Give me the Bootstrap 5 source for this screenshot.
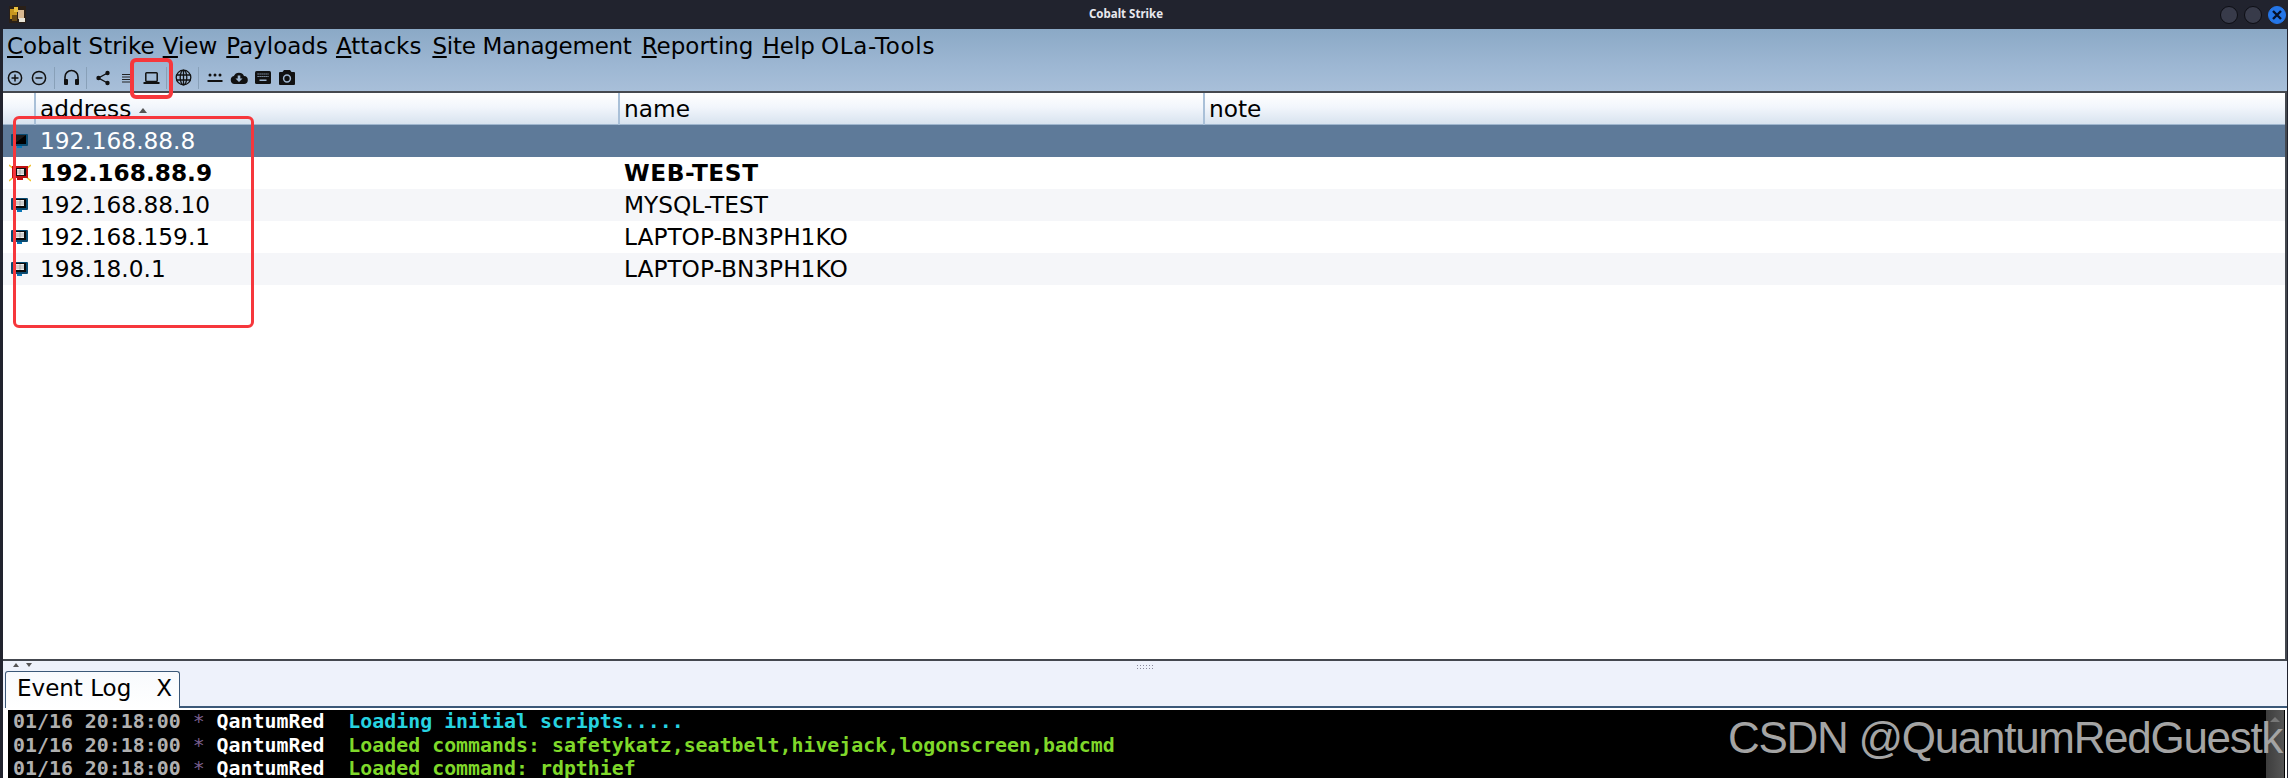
<!DOCTYPE html>
<html lang="en">
<head>
<meta charset="utf-8">
<title>Cobalt Strike</title>
<link rel="stylesheet" href="https://cdn.jsdelivr.net/npm/bootstrap@5.3.0/dist/css/bootstrap.min.css">
<style>
html,body{height:778px;overflow:hidden;background:#21232e}
body{font-family:"DejaVu Sans",sans-serif;color:#000;position:relative}
.titlebar{height:29px;background:#21232e;padding:0 0 0 9px}
.wintitle{flex:1 1 auto;padding-left:6px;margin-bottom:2px;text-align:center;color:#e8e8ee;font:700 11.5px/16px "Noto Sans",sans-serif}
.winbtn{width:18px;height:18px;border-radius:50%;background:#383b4a;border:1px solid #0d0e14;margin-right:6px}
.winbtn.closer{background:#2476e8;border-color:#2476e8;margin-right:2px}
.appshell{margin:0 1px 0 3px;height:749px}
.menuband{height:64px;background:linear-gradient(180deg,#8ba9c6 0%,#9db7d3 60%,#a8bfd9 100%);border-bottom:2px solid #44484f}
.menurow{height:36px;font-size:23px;line-height:35px;white-space:nowrap}
.menuitem{display:block;margin-left:9px}
.menuitem.first{margin-left:4px}
.menuitem.tight{margin-left:8px}
.menuitem.squeezed{letter-spacing:-.25px;margin-left:11px}
.menuitem.wider{margin-left:10px}
.menuitem.stretched{letter-spacing:.7px;margin-left:6px}
.toolrow{height:25px;padding-left:0}
.tbtn{width:24px;height:24px}
.tsep{width:8px;height:24px;position:relative}
.tsep::after{content:"";position:absolute;left:3px;top:1px;bottom:1px;width:1px;background:#88a0b8}
.gridarea{height:568px;background:#fff;overflow:hidden;border-right:2px solid #44484f;border-bottom:2px solid #44484f}
.hosts{table-layout:fixed;width:100%;font-size:23.25px;margin:0;border-collapse:collapse}
.hosts>*>tr>*{padding:0;border:0;background:transparent;color:#000;box-shadow:none;vertical-align:middle;line-height:32px;height:32px;white-space:nowrap}
.hosts>thead>tr>th{font-weight:400;height:31px;line-height:28px;padding:2px 0 0 4px;background:linear-gradient(180deg,#fff 0%,#f2f6fc 45%,#d8e3ef 100%);border-left:2px solid #a9c0d8;border-bottom:1px solid #9fb6ce}
.hosts>thead>tr>th:first-child{border-left:0}
.hosts tbody td{padding-left:5px}
.hosts tbody td:first-child{padding-left:8px}
.hosts tbody td.namecell{padding-left:5px}
.hosts tbody td.namecell.fw-bold{letter-spacing:.6px}
.hosts tbody tr.picked>td{background:#5e7a99;color:#fff}
.hosts tbody tr.zebra>td{background:#f5f6f9}
.sortmark{display:inline-block;width:0;height:0;border:4px solid transparent;border-bottom:5px solid #555;border-top:0;margin-left:8px;vertical-align:middle}
.hosticon{display:block;margin-top:2px}
.hosticon.warned{margin-left:-2px;margin-top:0}
.splitband{height:47px;background:#eef2fb;position:relative}
.splitgrip{position:absolute;left:10px;top:2px;display:flex;gap:7px}
.arrowup{width:0;height:0;border:3px solid transparent;border-top:0;border-bottom:4px solid #555}
.arrowdown{width:0;height:0;border:3px solid transparent;border-bottom:0;border-top:4px solid #555}
.griptex{position:absolute;left:1133px;top:3px;width:19px;height:5px;background-image:radial-gradient(#889 40%,transparent 45%);background-size:3px 3px}
.tabstrip{position:absolute;left:2px;right:0;bottom:0;height:2px;background:#3b5878}
.evtab{position:absolute;left:2px;bottom:0;width:175px;height:37px;background:#fff;background-image:linear-gradient(180deg,#f8fafd,#fff);border:1px solid #3b5878;border-bottom:0;border-radius:3px 3px 0 0;font-size:23px;line-height:33px;padding:0 0 0 11px;z-index:1;white-space:nowrap}
.tabx{margin-left:25px}
.consolewrap{padding:2px 2px 0 5px;height:70px;overflow:hidden;position:relative;background:#fff}
.conlines{background:#000;height:68px;margin:0;padding:0 0 0 5px;font:700 19.9px/23.5px "DejaVu Sans Mono",monospace;white-space:pre;overflow:hidden;border-radius:0;color:#b0b0b0}
.ts{color:#b0b0b0}
.star{color:#7a5f8e;font-weight:400}
.who{color:#fff}
.c-cyan{color:#27d3e0}
.c-green{color:#7fd82a}
.vscroll{position:absolute;right:3px;top:2px;width:18px;bottom:0;background:linear-gradient(90deg,#3d3d3d,#555)}
.vscroll::before{content:"";position:absolute;left:4px;top:7px;border:5px solid transparent;border-top:0;border-bottom:5px solid #777}
.stamp{position:absolute;left:1728px;top:712px;font:400 44px/52px "Liberation Sans",sans-serif;color:#a4a4a4;letter-spacing:-1.3px;white-space:nowrap;z-index:5}
.redbox{position:absolute;border:4px solid #f6373c;border-radius:6px;z-index:6}
.redbox.one{left:130px;top:58px;width:43px;height:41px}
.redbox.two{left:13px;top:116px;width:241px;height:212px;border-width:3px}
</style>
</head>
<body>
<header class="titlebar d-flex align-items-center">
  <svg width="17" height="17" viewBox="0 0 17 17" aria-hidden="true"><rect width="17" height="17" fill="#2a2018"/><rect x="1" y="3" width="7" height="10" fill="#c8961e"/><rect x="5" y="1" width="4" height="5" fill="#e8c040"/><rect x="9" y="4" width="6" height="9" fill="#d8b890"/><rect x="3" y="9" width="5" height="6" fill="#6a4a14"/><rect x="10" y="12" width="6" height="4" fill="#e8e4d8"/></svg>
  <div class="wintitle">Cobalt Strike</div>
  <div class="d-flex align-items-center">
    <span class="winbtn"></span><span class="winbtn"></span>
    <span class="winbtn closer d-flex align-items-center justify-content-center"><svg width="12" height="12" viewBox="0 0 12 12" aria-hidden="true"><path d="M2 2l8 8M10 2l-8 8" stroke="#06122a" stroke-width="2.4" fill="none"/></svg></span>
  </div>
</header>

<main class="appshell d-flex flex-column">
  <div class="menuband">
    <nav class="menurow d-flex">
      <span class="menuitem first"><u>C</u>obalt Strike</span>
      <span class="menuitem tight"><u>V</u>iew</span>
      <span class="menuitem"><u>P</u>ayloads</span>
      <span class="menuitem tight"><u>A</u>ttacks</span>
      <span class="menuitem squeezed"><u>S</u>ite Management</span>
      <span class="menuitem wider"><u>R</u>eporting</span>
      <span class="menuitem"><u>H</u>elp</span>
      <span class="menuitem stretched">OLa-Tools</span>
    </nav>
    <div class="toolrow d-flex align-items-center">
      <span class="tbtn d-flex align-items-center justify-content-center"><svg width="16" height="16" viewBox="0 0 16 16"><circle cx="8" cy="8" r="6.6" fill="none" stroke="#111" stroke-width="1.5"/><path d="M4.5 8h7M8 4.5v7" stroke="#111" stroke-width="1.5"/></svg></span>
      <span class="tbtn d-flex align-items-center justify-content-center"><svg width="16" height="16" viewBox="0 0 16 16"><circle cx="8" cy="8" r="6.6" fill="none" stroke="#111" stroke-width="1.5"/><path d="M4.5 8h7" stroke="#111" stroke-width="1.5"/></svg></span>
      <span class="tsep"></span>
      <span class="tbtn d-flex align-items-center justify-content-center"><svg width="17" height="17" viewBox="0 0 17 17"><path d="M2 11V8a6.500 6.500 0 0 1 13 0v3" fill="none" stroke="#111" stroke-width="1.6"/><rect x="1" y="10" width="4" height="6" rx="1" fill="#111"/><rect x="12" y="10" width="4" height="6" rx="1" fill="#111"/></svg></span>
      <span class="tsep"></span>
      <span class="tbtn d-flex align-items-center justify-content-center"><svg width="16" height="16" viewBox="0 0 16 16"><path d="M12.500 3L3.500 8l9 5" fill="none" stroke="#111" stroke-width="1.4"/><circle cx="12.500" cy="3" r="2.200" fill="#111"/><circle cx="3.500" cy="8" r="2.200" fill="#111"/><circle cx="12.500" cy="13" r="2.200" fill="#111"/></svg></span>
      <span class="tbtn d-flex align-items-center justify-content-center"><svg width="12" height="12" viewBox="0 0 12 12"><path d="M1 2.500h10M1 5h10M1 7.500h10M1 10h10" stroke="#222" stroke-width="1.100"/></svg></span>
      <span class="tbtn d-flex align-items-center justify-content-center"><svg width="17" height="14" viewBox="0 0 17 14"><rect x="2.800" y="1.800" width="11.400" height="8.600" rx=".8" fill="none" stroke="#111" stroke-width="1.500"/><rect x="0.500" y="11" width="16" height="2" fill="#111"/></svg></span>
      <span class="tsep"></span>
      <span class="tbtn d-flex align-items-center justify-content-center"><svg width="17" height="17" viewBox="0 0 17 17"><g fill="none" stroke="#111" stroke-width="1.300"><circle cx="8.500" cy="8.500" r="7.300"/><ellipse cx="8.500" cy="8.500" rx="3.300" ry="7.300"/><path d="M8.500 1.200v14.600M1.500 6h14M1.500 11h14"/></g></svg></span>
      <span class="tsep"></span>
      <span class="tbtn d-flex align-items-center justify-content-center"><svg width="16" height="10" viewBox="0 0 16 10"><circle cx="3" cy="2" r="1.500" fill="#111"/><circle cx="8" cy="2" r="1.500" fill="#111"/><circle cx="13" cy="2" r="1.500" fill="#111"/><rect x="0.500" y="7" width="15" height="2" fill="#111"/></svg></span>
      <span class="tbtn d-flex align-items-center justify-content-center"><svg width="18" height="14" viewBox="0 0 18 14"><path d="M4.500 13a4 4 0 0 1-.6-7.900A5.500 5.500 0 0 1 14 5a4 4 0 0 1-.4 8z" fill="#111"/><path d="M7.700 4.500h2.600v3h2.200L9 11 5.500 7.500h2.200z" fill="#a0b8d2"/></svg></span>
      <span class="tbtn d-flex align-items-center justify-content-center"><svg width="16" height="13" viewBox="0 0 16 13"><rect width="16" height="13" rx="1.500" fill="#111"/><path d="M2.500 3h11M2.500 5.500h11" stroke="#9db5d0" stroke-width="1.200" stroke-dasharray="1.200 .8"/><rect x="4.500" y="8.500" width="7" height="1.500" fill="#9db5d0"/></svg></span>
      <span class="tbtn d-flex align-items-center justify-content-center"><svg width="16" height="15" viewBox="0 0 16 15"><path d="M5 0h6l1.500 2H15a1 1 0 0 1 1 1v11a1 1 0 0 1-1 1H1a1 1 0 0 1-1-1V3a1 1 0 0 1 1-1h2.500z" fill="#111"/><circle cx="8" cy="8.500" r="3.400" fill="none" stroke="#a0b8d2" stroke-width="1.500"/></svg></span>
    </div>
  </div>

  <div class="gridarea">
    <table class="table hosts">
      <colgroup><col style="width:32px"><col style="width:584px"><col style="width:585px"><col></colgroup>
      <thead><tr><th></th><th>address<span class="sortmark"></span></th><th>name</th><th>note</th></tr></thead>
      <tbody>
        <tr class="picked"><td><svg class="hosticon" width="17" height="15" viewBox="0 0 17 15"><rect width="17" height="12" rx="1" fill="#0a4a70"/><rect x="2" y="1" width="13" height="9" fill="#1c1c1c"/><path d="M15 1v9H3z" fill="#000"/><rect x="6" y="12" width="5" height="2" fill="#0b78b8"/></svg></td><td>192.168.88.8</td><td class="namecell"></td><td></td></tr>
        <tr><td><svg class="hosticon warned" width="22" height="18" viewBox="0 0 22 18"><path d="M0 1l6 5M22 1l-6 5M0 17l6-5M22 17l-6-5" stroke="#f0c030" stroke-width="1.500"/><rect x="3" y="2" width="16" height="12" fill="#c01010"/><rect x="5" y="4" width="12" height="8" fill="#111"/><rect x="8" y="5" width="7" height="6" fill="#eee"/><path d="M8 7h7M8 9h7M11 5v6" stroke="#888" stroke-width=".6"/><rect x="8" y="14" width="6" height="2" fill="#c01010"/></svg></td><td class="fw-bold">192.168.88.9</td><td class="namecell fw-bold">WEB-TEST</td><td></td></tr>
        <tr class="zebra"><td><svg class="hosticon" width="17" height="15" viewBox="0 0 17 15"><rect width="17" height="12" rx="1" fill="#0a4a70"/><rect x="2" y="1" width="13" height="9" fill="#0a0a0a"/><rect x="5" y="2" width="8" height="6" fill="#eee"/><path d="M5 4h8M5 6h8M9 2v6" stroke="#888" stroke-width=".6"/><rect x="6" y="12" width="5" height="2" fill="#0b78b8"/></svg></td><td>192.168.88.10</td><td class="namecell">MYSQL-TEST</td><td></td></tr>
        <tr><td><svg class="hosticon" width="17" height="15" viewBox="0 0 17 15"><rect width="17" height="12" rx="1" fill="#0a4a70"/><rect x="2" y="1" width="13" height="9" fill="#0a0a0a"/><rect x="5" y="2" width="8" height="6" fill="#eee"/><path d="M5 4h8M5 6h8M9 2v6" stroke="#888" stroke-width=".6"/><rect x="6" y="12" width="5" height="2" fill="#0b78b8"/></svg></td><td>192.168.159.1</td><td class="namecell">LAPTOP-BN3PH1KO</td><td></td></tr>
        <tr class="zebra"><td><svg class="hosticon" width="17" height="15" viewBox="0 0 17 15"><rect width="17" height="12" rx="1" fill="#0a4a70"/><rect x="2" y="1" width="13" height="9" fill="#0a0a0a"/><rect x="5" y="2" width="8" height="6" fill="#eee"/><path d="M5 4h8M5 6h8M9 2v6" stroke="#888" stroke-width=".6"/><rect x="6" y="12" width="5" height="2" fill="#0b78b8"/></svg></td><td>198.18.0.1</td><td class="namecell">LAPTOP-BN3PH1KO</td><td></td></tr>
      </tbody>
    </table>
  </div>

  <div class="splitband">
    <div class="splitgrip"><span class="arrowup"></span><span class="arrowdown"></span></div>
    <span class="griptex"></span>
    <div class="tabstrip"></div>
    <div class="evtab">Event Log<span class="tabx">X</span></div>
  </div>
  <div class="consolewrap">
<pre class="conlines"><span class="ts">01/16 20:18:00</span> <span class="star">*</span> <span class="who">QantumRed</span>  <span class="c-cyan">Loading initial scripts.....</span>
<span class="ts">01/16 20:18:00</span> <span class="star">*</span> <span class="who">QantumRed</span>  <span class="c-green">Loaded commands: safetykatz,seatbelt,hivejack,logonscreen,badcmd</span>
<span class="ts">01/16 20:18:00</span> <span class="star">*</span> <span class="who">QantumRed</span>  <span class="c-green">Loaded command: rdpthief</span></pre>
    <div class="vscroll"></div>
  </div>
</main>
<div class="stamp">CSDN @QuantumRedGuestk</div>
<div class="redbox one"></div>
<div class="redbox two"></div>
<script src="https://cdn.jsdelivr.net/npm/bootstrap@5.3.0/dist/js/bootstrap.bundle.min.js"></script>
</body>
</html>
